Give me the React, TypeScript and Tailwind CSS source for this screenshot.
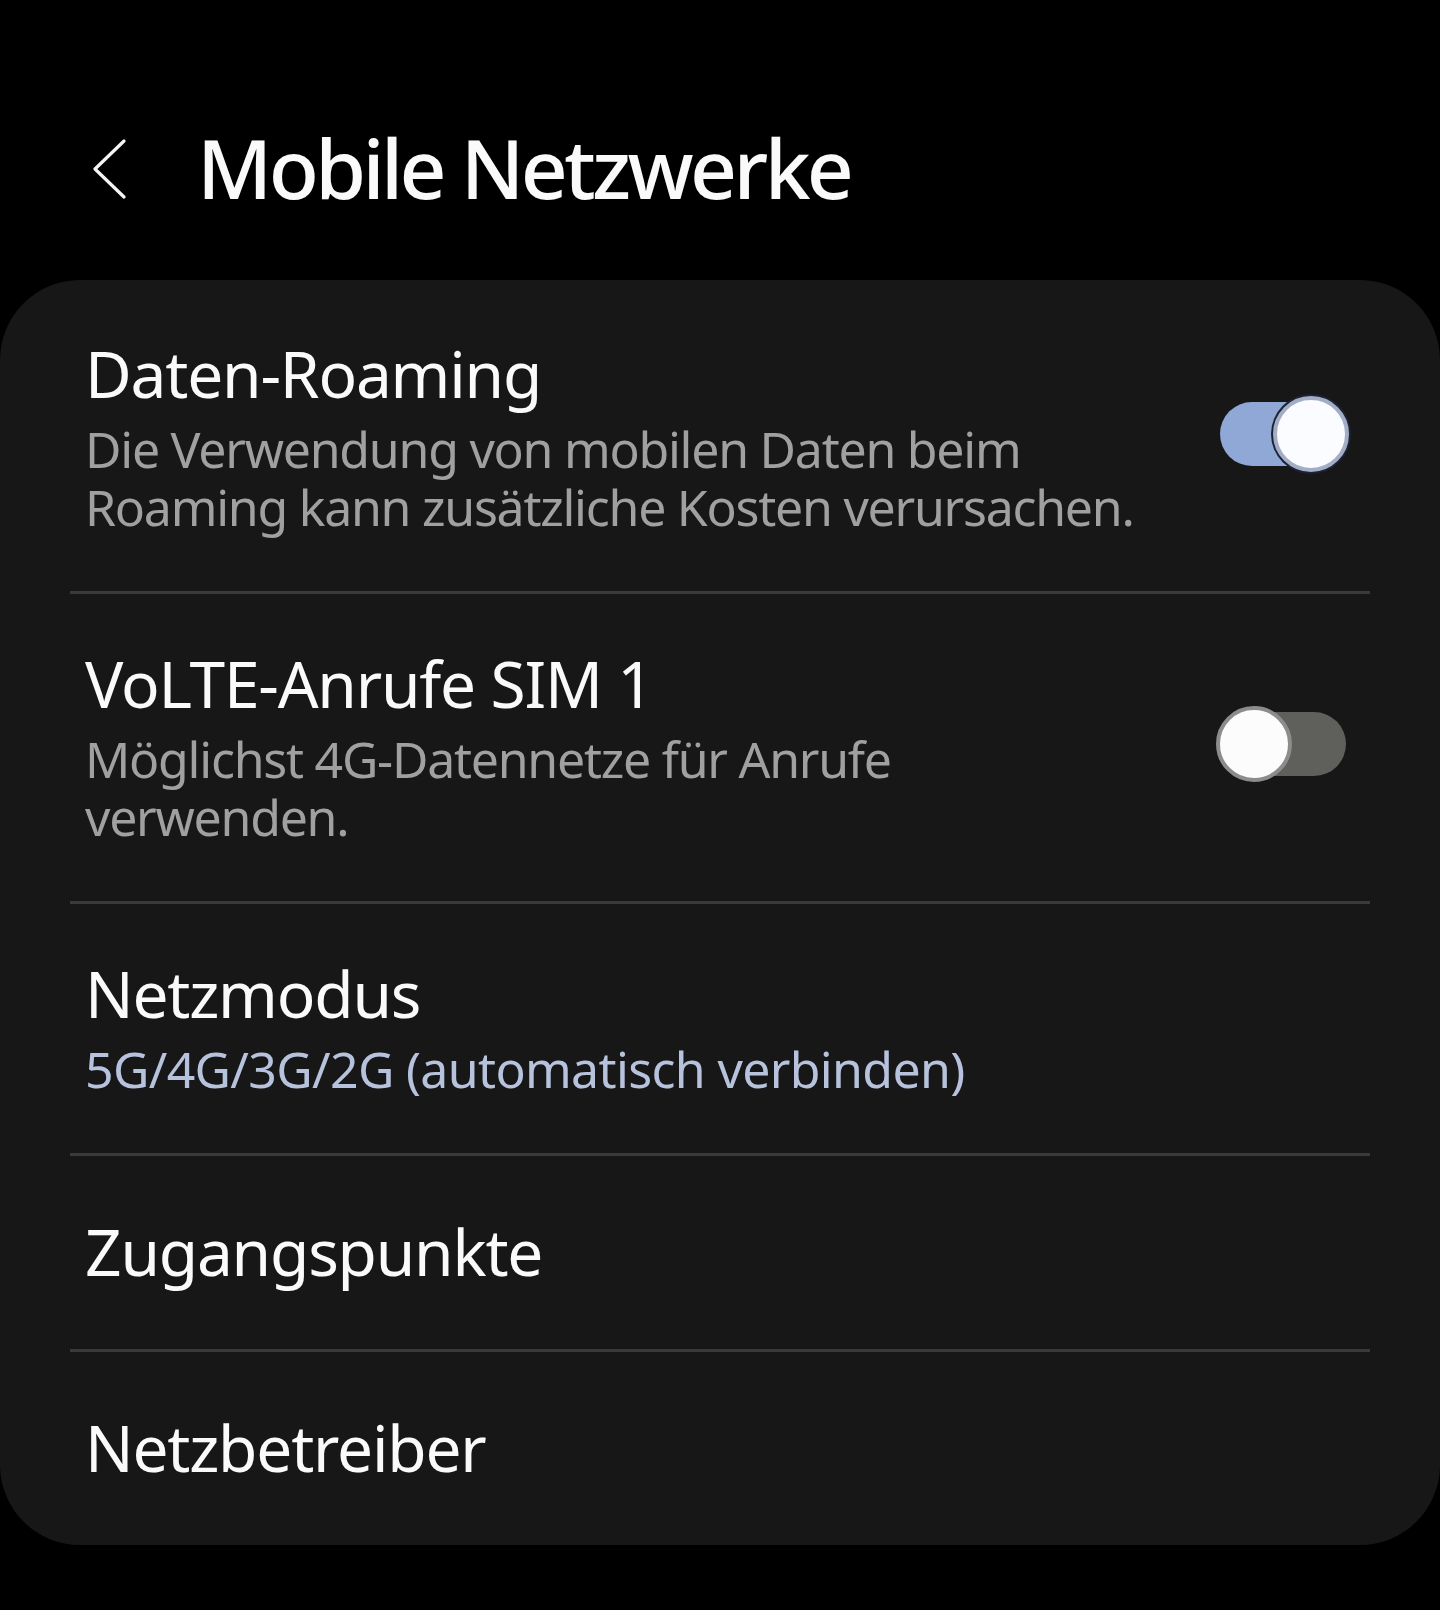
import { useState } from 'react'

type Row = {
  title: string
  subtitle?: string[]
  accent?: boolean
  toggle?: boolean
}

const ROWS: Row[] = [
  {
    title: 'Daten-Roaming',
    subtitle: ['Die Verwendung von mobilen Daten beim', 'Roaming kann zusätzliche Kosten verursachen.'],
    toggle: true
  },
  {
    title: 'VoLTE-Anrufe SIM 1',
    subtitle: ['Möglichst 4G-Datennetze für Anrufe', 'verwenden.'],
    toggle: false
  },
  {
    title: 'Netzmodus',
    subtitle: ['5G/4G/3G/2G (automatisch verbinden)'],
    accent: true
  },
  { title: 'Zugangspunkte' },
  { title: 'Netzbetreiber' }
]

function Toggle({ on, onClick }: { on: boolean; onClick: () => void }) {
  return (
    <button
      onClick={onClick}
      className="relative mb-[10px] h-[64px] w-[126px] shrink-0"
      aria-pressed={on}
    >
      <span
        className={
          on
            ? 'absolute inset-0 rounded-full bg-[#8fa8d5]'
            : 'absolute inset-0 rounded-full bg-[#5f605c]'
        }
      />
      <span
        className={
          on
            ? 'absolute top-[-6px] left-[53px] h-[76px] w-[76px] rounded-full border-[4px] border-[#a3aec6] bg-[#fafcff] ring-2 ring-[#1b2233]'
            : 'absolute top-[-6px] left-[-4px] h-[76px] w-[76px] rounded-full border-[4px] border-[#8c8c8c] bg-[#fcfcfc]'
        }
      />
    </button>
  )
}

export default function App() {
  const [toggles, setToggles] = useState<Record<number, boolean>>({ 0: true, 1: false })

  return (
    <div
      className="min-h-[1610px] w-full bg-black text-[#fafafa]"
      style={{ fontFamily: '"Noto Sans", "Open Sans", sans-serif' }}
    >
      <header className="flex h-[280px] items-start pt-[126px]">
        <svg
          className="ml-[92px] mt-[13px] shrink-0"
          width="34"
          height="60"
          viewBox="0 0 34 60"
          fill="none"
        >
          <polyline
            points="32,2 3,30 32,58"
            stroke="#f5f5f5"
            strokeWidth="3.2"
            strokeLinecap="round"
            strokeLinejoin="round"
          />
        </svg>
        <h1 className="ml-[71px] text-[82px] leading-[82px] font-medium tracking-[-3.6px]">
          Mobile Netzwerke
        </h1>
      </header>

      <div className="rounded-[80px] bg-[#171717] pt-[4px]">
        {ROWS.map((row, i) => (
          <div key={row.title}>
            {i > 0 && <div className="mx-[70px] h-[3px] bg-[#3a3a3a]" />}
            <div
              className={
                row.subtitle
                  ? 'flex items-center pt-[58px] pr-[94px] pb-[55px] pl-[85px]'
                  : 'flex items-center pt-[64px] pr-[94px] pb-[65px] pl-[85px]'
              }
            >
              <div className="min-w-0 flex-1">
                <div className="text-[64px] leading-[64px] tracking-[-1.2px] whitespace-nowrap">
                  {row.title}
                </div>
                {row.subtitle && (
                  <p
                    className={
                      row.accent
                        ? 'mt-[14px] text-[50px] leading-[58px] tracking-[-0.65px] whitespace-pre text-[#b7c2dd]'
                        : 'mt-[14px] text-[50px] leading-[58px] tracking-[-1.25px] whitespace-pre text-[#a0a0a0]'
                    }
                  >
                    {row.subtitle.join('\n')}
                  </p>
                )}
              </div>
              {row.toggle !== undefined && (
                <Toggle
                  on={!!toggles[i]}
                  onClick={() => setToggles((prev) => ({ ...prev, [i]: !prev[i] }))}
                />
              )}
            </div>
          </div>
        ))}
      </div>
    </div>
  )
}
